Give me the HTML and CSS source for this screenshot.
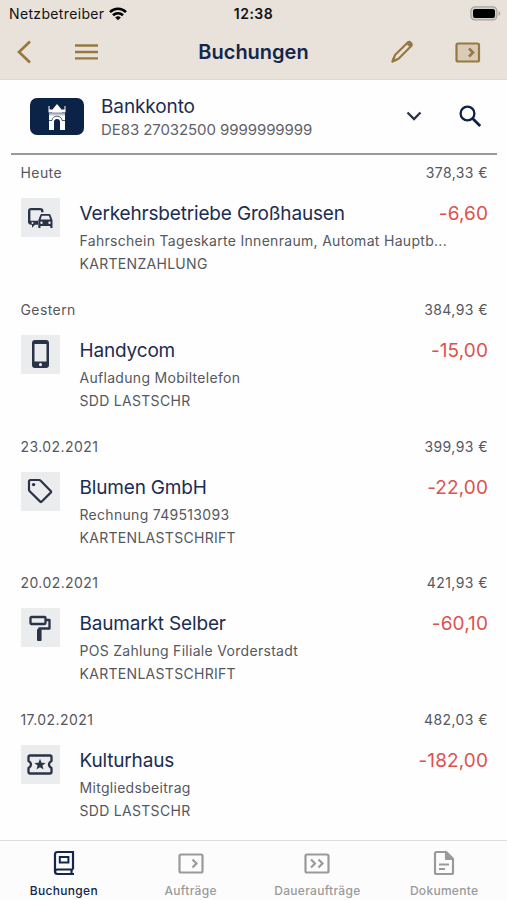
FILE: index.html
```html
<!DOCTYPE html>
<html lang="de">
<head>
    <meta charset="UTF-8">
    <meta name="viewport" content="width=device-width, initial-scale=1.0">
    <title>Buchungen</title>
    <link rel="stylesheet" href="styles.css">
</head>
<body>
    <header class="header">
        <div class="status-bar">
            <div class="carrier">
                <span>Netzbetreiber</span>
                <svg width="18" height="14" viewBox="0 0 18 14" fill="none" stroke="#000" stroke-width="2.6">
                    <path d="M1 5.1a11.4 11.4 0 0 1 16 0"/>
                    <path d="M4 8.2a7.2 7.2 0 0 1 10 0"/>
                    <path d="M9 13.2 6.2 10.5a4 4 0 0 1 5.6 0z" fill="#000" stroke="none"/>
                </svg>
            </div>
            <span class="time">12:38</span>
            <svg class="battery" width="31" height="15" viewBox="0 0 31 15">
                <rect x=".9" y=".9" width="26" height="13" rx="4" fill="#d5d1cb" stroke="#a5a29d" stroke-width="1.2"/>
                <rect x="3" y="3" width="22" height="9" rx="2" fill="#000"/>
                <path d="M28.6 5v5c2-.7 2-4.300 0-5z" fill="#a5a29d"/>
            </svg>
        </div>
        <div class="toolbar">
            <div class="tools">
                <svg width="16" height="24" viewBox="0 0 16 24" fill="none" stroke="#97793f" stroke-width="2.7"><path d="M14 1.500 3 12l11 10.500"/></svg>
                <svg width="23" height="16" viewBox="0 0 23 16" stroke="#97793f" stroke-width="2.300"><path d="M0 1.500h23M0 8h23M0 14.300h23"/></svg>
            </div>
            <h1 class="page-title">Buchungen</h1>
            <div class="tools tools-right">
                <svg width="24" height="24" viewBox="0 0 24 24" fill="none" stroke="#97793f" stroke-width="2.200" stroke-linejoin="round">
                    <path d="M2.500 21.500 5 15 17.500 2.700q1.800-1.500 3.400.2t.1 3.400L8.500 18.700z"/>
                    <path d="m16 3.500 4.500 4.500 1.600-2.200q.5-2.300-1.200-3.500t-3-.4z" fill="#97793f" stroke="none"/>
                    <path d="m2 22 1.300-4.500 3.200 2.900z" fill="#97793f" stroke-width="1"/>
                </svg>
                <svg width="26" height="21" viewBox="0 0 26 21" fill="none" stroke="#97793f" stroke-width="2.200"><rect x="1.500" y="1.500" width="22.500" height="18" rx="1.500" fill="#d9cbb8"/><path d="m14 6.500 4 4-4 4" stroke-width="2.600"/></svg>
            </div>
        </div>
    </header>

    <section class="account">
        <div class="account-logo">
            <svg width="18" height="26" viewBox="0 0 18 26" fill="#fff">
                <path d="M9 0 4 6v2.500h10V6z"/>
                <path d="M.5 2h1v3.500H4V8h10V5.500h2.500V2h1v6.500H.5z"/>
                <path d="M1 9.200h16V12H1z" opacity=".75"/>
                <path d="M1 11.500h16V26h-5v-8a3 3 0 0 0-6 0v8H1z"/>
                <path d="M3.800 16.500a5.300 5.300 0 0 1 10.400 0M1 16.500h3m10 0h3" fill="none" stroke="#0c2348" stroke-width=".7"/>
            </svg>
        </div>
        <div class="account-text">
            <div class="account-name">Bankkonto</div>
            <div class="account-iban">DE83 27032500 9999999999</div>
        </div>
        <svg class="chevron" width="16" height="11" viewBox="0 0 16 11" fill="none" stroke="#2a3347" stroke-width="2.300"><path d="m1.500 1.500 6.500 6.500 6.500-6.500"/></svg>
        <svg width="23" height="23" viewBox="0 0 23 23" fill="none" stroke="#0c2348"><circle cx="8.500" cy="8.500" r="6.900" stroke-width="2.300"/><path d="m13.600 13.600 7.600 7.500" stroke-width="2.800"/></svg>
    </section>

    <main class="bookings">
        <section class="day">
            <div class="day-head"><span>Heute</span><span>378,33 €</span></div>
            <div class="booking">
                <div class="category">
                    <svg width="26" height="22" viewBox="0 0 26 22" fill="#2a3347">
                        <path d="M4 1h9q3.500 0 3.500 3v1.300H14V3.300H3.400v10.400H11v4H8l-3 3v-3H4q-3-.5-3-3V4q0-3 3-3z"/>
                        <circle cx="5.500" cy="16" r="1" fill="#ebeced"/>
                        <path fill-rule="evenodd" d="M14.300 7h8.200l1 .8 2 5.500V21h-2.200v-2H13.500v2h-2.200v-7.700l2-5.500zm.6 1.700L13.600 12.500h9.600l-1.300-3.800zM14.500 14.500a1.200 1.200 0 1 0 0 2.400 1.200 1.200 0 0 0 0-2.400zm8 0a1.200 1.200 0 1 0 0 2.400 1.200 1.200 0 0 0 0-2.400z"/>
                    </svg>
                </div>
                <div class="details">
                    <div class="title-row"><span class="name">Verkehrsbetriebe Großhausen</span><span class="amount">-6,60</span></div>
                    <div class="purpose">Fahrschein Tageskarte Innenraum, Automat Hauptb...</div>
                    <div class="type">KARTENZAHLUNG</div>
                </div>
            </div>
        </section>

        <section class="day">
            <div class="day-head"><span>Gestern</span><span>384,93 €</span></div>
            <div class="booking">
                <div class="category">
                    <svg width="17" height="28" viewBox="0 0 17 28" fill="#2a3347">
                        <path fill-rule="evenodd" d="M3 0h11q3 0 3 3v22q0 3-3 3H3q-3 0-3-3V3q0-3 3-3zM2.500 4v17.500h12V4zM8.500 23a1.600 1.600 0 1 0 0 3.200 1.600 1.600 0 0 0 0-3.200z"/>
                    </svg>
                </div>
                <div class="details">
                    <div class="title-row"><span class="name">Handycom</span><span class="amount">-15,00</span></div>
                    <div class="purpose">Aufladung Mobiltelefon</div>
                    <div class="type">SDD LASTSCHR</div>
                </div>
            </div>
        </section>

        <section class="day">
            <div class="day-head"><span>23.02.2021</span><span>399,93 €</span></div>
            <div class="booking">
                <div class="category">
                    <svg width="26" height="26" viewBox="0 0 26 26" fill="none" stroke="#2a3347" stroke-width="2.200" stroke-linejoin="round">
                        <path d="M3.500 2H12q1 0 1.700.7l10 10.300q.8.800 0 1.600l-8.900 9q-.8.800-1.600 0L2.700 13.300Q2 12.600 2 11.800V3.500Q2 2 3.500 2z"/>
                        <circle cx="6.600" cy="6.600" r="1.700" fill="#2a3347" stroke="none"/>
                    </svg>
                </div>
                <div class="details">
                    <div class="title-row"><span class="name">Blumen GmbH</span><span class="amount">-22,00</span></div>
                    <div class="purpose">Rechnung 749513093</div>
                    <div class="type">KARTENLASTSCHRIFT</div>
                </div>
            </div>
        </section>

        <section class="day">
            <div class="day-head"><span>20.02.2021</span><span>421,93 €</span></div>
            <div class="booking">
                <div class="category">
                    <svg width="22" height="26" viewBox="0 0 22 26" fill="none" stroke="#2a3347" stroke-width="2.300" stroke-linejoin="round">
                        <rect x="1.500" y="2" width="15" height="7" rx="1"/>
                        <path d="M17 5h3.500v8.500H10.300V16"/>
                        <rect x="8" y="14" width="4.600" height="12" rx="1" fill="#2a3347" stroke="none"/>
                    </svg>
                </div>
                <div class="details">
                    <div class="title-row"><span class="name">Baumarkt Selber</span><span class="amount">-60,10</span></div>
                    <div class="purpose">POS Zahlung Filiale Vorderstadt</div>
                    <div class="type">KARTENLASTSCHRIFT</div>
                </div>
            </div>
        </section>

        <section class="day">
            <div class="day-head"><span>17.02.2021</span><span>482,03 €</span></div>
            <div class="booking">
                <div class="category">
                    <svg width="26" height="21" viewBox="0 0 26 21" fill="none" stroke="#2a3347" stroke-width="2.300" stroke-linejoin="round">
                        <path d="M3 1.500h20q1.500 0 1.500 1.500v4q-2.500 1.300-2.500 3.500t2.500 3.500v4q0 1.500-1.500 1.500H3q-1.500 0-1.500-1.500v-4Q4 12.700 4 10.500T1.500 7V3q0-1.500 1.500-1.500z"/>
                        <path d="m13 4.800 1.500 3.900 4.100.2-3.200 2.600 1.100 4-3.500-2.300-3.500 2.300 1.100-4-3.200-2.600 4.100-.2z" fill="#2a3347" stroke="none"/>
                    </svg>
                </div>
                <div class="details">
                    <div class="title-row"><span class="name">Kulturhaus</span><span class="amount">-182,00</span></div>
                    <div class="purpose">Mitgliedsbeitrag</div>
                    <div class="type">SDD LASTSCHR</div>
                </div>
            </div>
        </section>
    </main>

    <nav class="tabs">
        <a class="tab active">
            <svg width="22" height="26" viewBox="0 0 22 26" fill="none" stroke="currentColor" stroke-width="2.200">
                <path d="M20 19.500V2H4.500Q2 2 2 4.500v17Q2 24 4.500 24H21M2.200 21.500q0-2 2.300-2H20M18.500 19.500V24"/>
                <rect x="6.800" y="7" width="8.600" height="5.500" stroke-width="2"/>
            </svg>
            <span>Buchungen</span>
        </a>
        <a class="tab">
            <svg width="26" height="26" viewBox="0 0 26 26" fill="none" stroke="currentColor" stroke-width="2.200"><rect x="1.500" y="4.500" width="23" height="18" rx="1.500"/><path d="m14.500 9.500 4 4-4 4"/></svg>
            <span>Aufträge</span>
        </a>
        <a class="tab">
            <svg width="26" height="26" viewBox="0 0 26 26" fill="none" stroke="currentColor" stroke-width="2.200"><rect x="1.500" y="4.500" width="23" height="18" rx="1.500"/><path d="m7 9.500 4 4-4 4M14.500 9.500l4 4-4 4"/></svg>
            <span>Daueraufträge</span>
        </a>
        <a class="tab">
            <svg width="22" height="26" viewBox="0 0 22 26" fill="none" stroke="currentColor" stroke-width="2.200" stroke-linejoin="round">
                <path d="M3.500 2H13l7 7v13.500q0 1.500-1.500 1.500h-15Q2 24 2 22.500v-19Q2 2 3.500 2z"/>
                <path d="M13 2v7h7z" fill="currentColor"/>
                <path d="M6 14.500h10M6 19h6" stroke-width="2"/>
            </svg>
            <span>Dokumente</span>
        </a>
    </nav>
</body>
</html>
```

FILE: styles.css
```css
* { box-sizing: border-box; }
body { margin: 0; height: 900px; display: flex; flex-direction: column; overflow: hidden; background: #fefefe; color: #55585f; font-family: Inter, "Liberation Sans", sans-serif; }
svg { display: block; flex: none; }

.header { height: 80px; background: #e9e2db; border-bottom: 1px solid #dcd8d3; }
.status-bar { height: 27px; padding: 0 6px; display: grid; grid-template-columns: 1fr auto 1fr; align-items: center; color: #111; font-size: 14px; line-height: 27px; }
.carrier { display: flex; align-items: center; gap: 5px; margin-left: 3px; letter-spacing: 0.35px; }
.time { font-weight: 600; letter-spacing: 0.5px; }
.battery { justify-self: end; }
.toolbar { height: 50px; padding: 0 16px; display: grid; grid-template-columns: 1fr auto 1fr; align-items: center; }
.tools { display: flex; align-items: center; gap: 43px; }
.tools-right { justify-content: flex-end; gap: 41px; margin-right: 10px; }
.page-title { margin: 0; color: #14264b; font-size: 20px; font-weight: 600; }

.account { height: 75px; margin: 0 10px 0 11px; padding: 0 15px 0 19px; display: flex; align-items: center; border-bottom: 2px solid #999; }
.account-logo { width: 54px; height: 37px; border-radius: 7px; background: #0c2348; display: flex; align-items: center; justify-content: center; }
.account-text { flex: 1; margin-left: 17px; padding-top: 2px; }
.account-name { color: #1b2d52; font-size: 19px; line-height: 24px; letter-spacing: -0.1px; }
.account-iban { color: #5f6269; font-size: 15px; line-height: 22px; letter-spacing: -0.08px; }
.chevron { margin-right: 37px; }

.bookings { flex: 1; padding: 0 19px 0 20.5px; }
.day { height: 136.8px; padding-top: 8px; }
.day-head { display: flex; justify-content: space-between; font-size: 14px; line-height: 20px; letter-spacing: 0.42px; }
.booking { display: flex; gap: 20px; margin-top: 15px; }
.category { width: 39px; height: 39px; background: #ebeced; display: flex; align-items: center; justify-content: center; }
.details { flex: 1; font-size: 14px; line-height: 23px; letter-spacing: 0.3px; }
.title-row { display: flex; justify-content: space-between; padding-top: 1px; font-size: 19px; line-height: 30px; letter-spacing: -0.17px; }
.name { color: #1b2d52; }
.amount { color: #dc524e; letter-spacing: 0.1px; }

.tabs { height: 60px; display: grid; grid-template-columns: repeat(4, 1fr); border-top: 1px solid #dedede; background: #fcfcfc; }
.tab { display: flex; flex-direction: column; align-items: center; padding: 9px 0 0 1px; gap: 6px; color: #9a9a9a; font-size: 12px; font-weight: 500; line-height: 18px; letter-spacing: 0.3px; }
.active { color: #14264b; }
```
